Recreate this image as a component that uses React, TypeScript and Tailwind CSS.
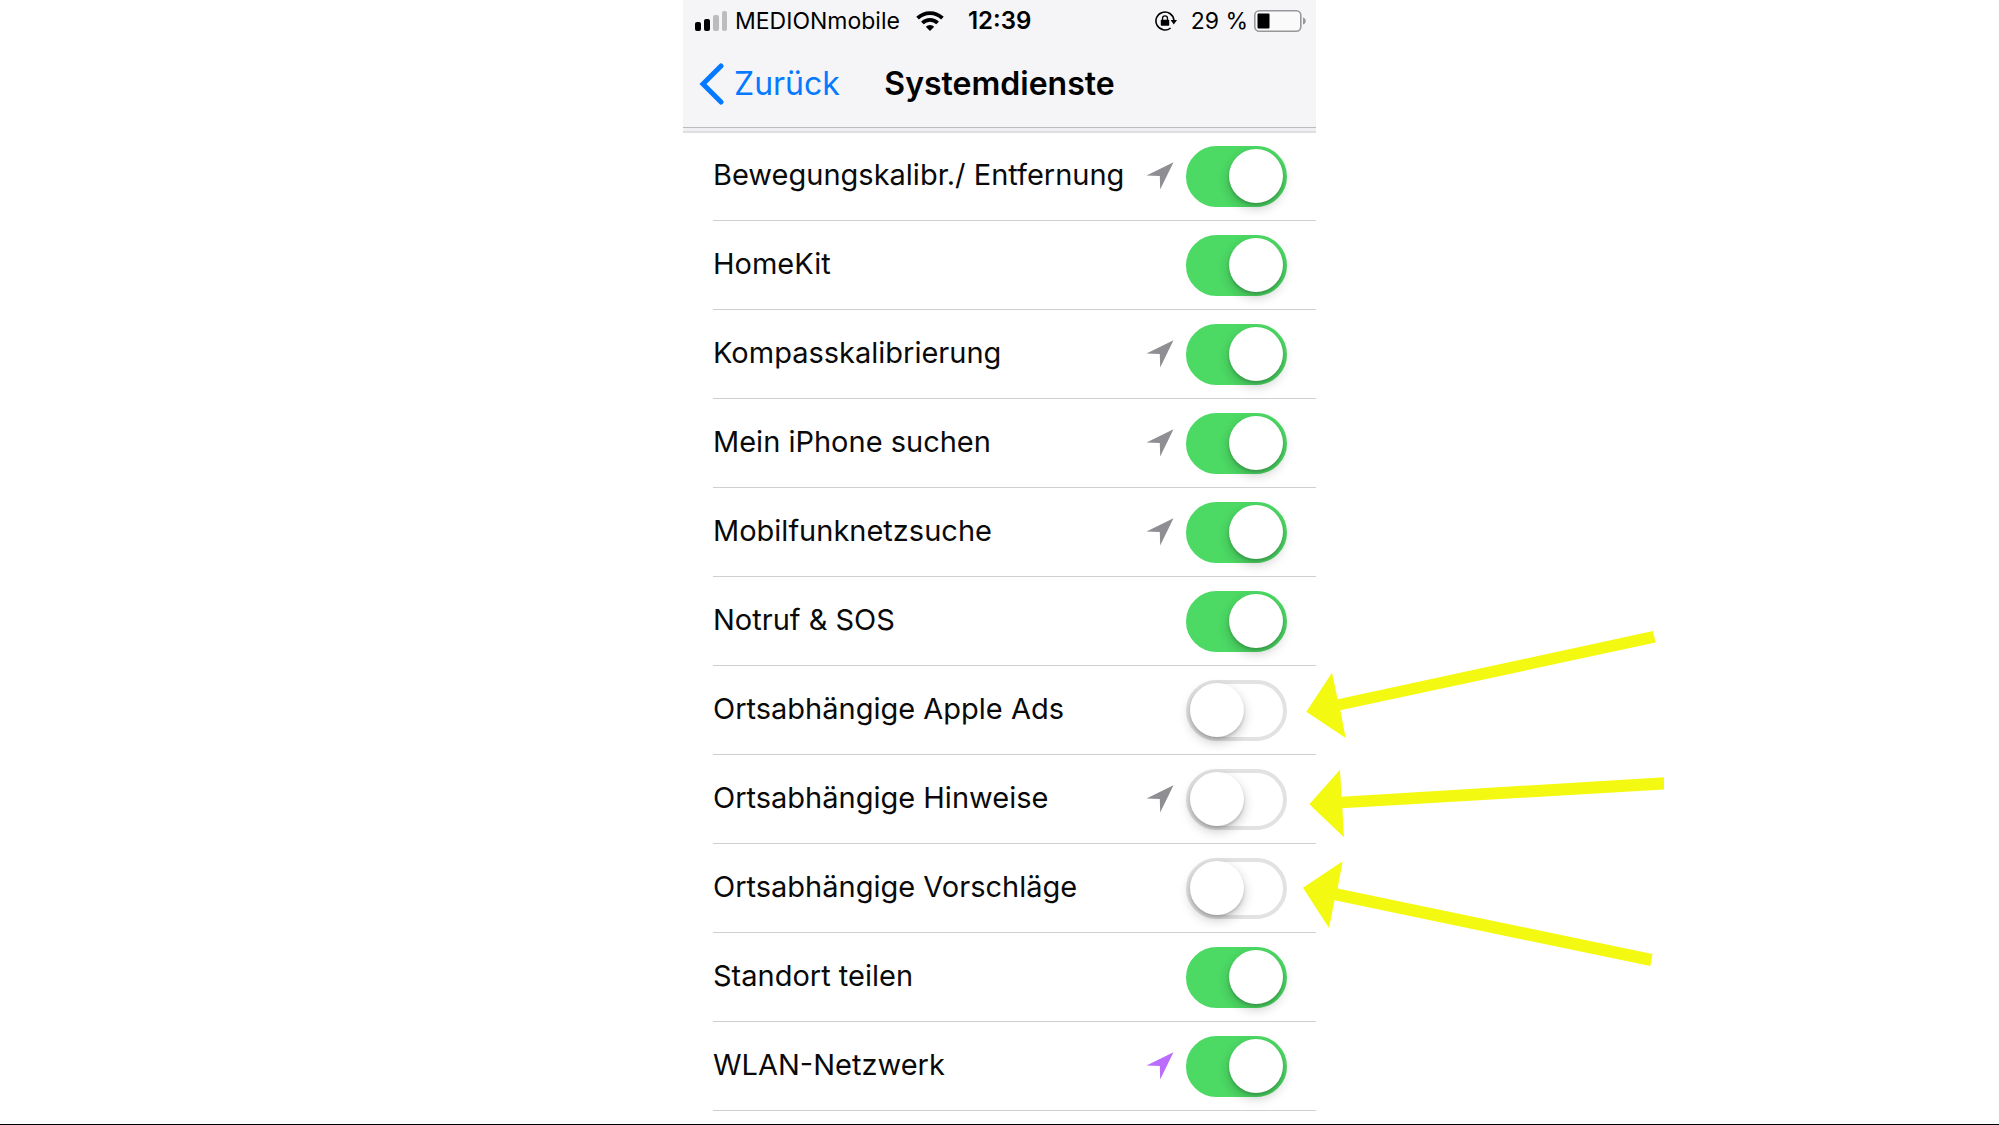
import { useState } from "react";

type LocationTone = "gray" | "purple";

type Service = {
  id: string;
  label: string;
  enabled: boolean;
  location?: LocationTone;
};

const initialServices: Service[] = [
  { id: "motion", label: "Bewegungskalibr./ Entfernung", enabled: true, location: "gray" },
  { id: "homekit", label: "HomeKit", enabled: true },
  { id: "compass", label: "Kompasskalibrierung", enabled: true, location: "gray" },
  { id: "find-iphone", label: "Mein iPhone suchen", enabled: true, location: "gray" },
  { id: "cell", label: "Mobilfunknetzsuche", enabled: true, location: "gray" },
  { id: "sos", label: "Notruf & SOS", enabled: true },
  { id: "ads", label: "Ortsabhängige Apple Ads", enabled: false },
  { id: "alerts", label: "Ortsabhängige Hinweise", enabled: false, location: "gray" },
  { id: "suggestions", label: "Ortsabhängige Vorschläge", enabled: false },
  { id: "share", label: "Standort teilen", enabled: true },
  { id: "wlan", label: "WLAN-Netzwerk", enabled: true, location: "purple" },
];

function SignalIcon() {
  return (
    <svg className="h-5 w-8 shrink-0" viewBox="0 0 32 20" aria-hidden="true">
      <rect x="0" y="11" width="6" height="9" rx="2" fill="#000" />
      <rect x="9" y="8" width="6" height="12" rx="2" fill="#000" />
      <rect x="18" y="4" width="6" height="16" rx="2" fill="#bcbcbe" />
      <rect x="27" y="0" width="5" height="20" rx="2" fill="#bcbcbe" />
    </svg>
  );
}

function WifiIcon() {
  return (
    <svg className="h-5 w-7 shrink-0" viewBox="0 0 28 20" aria-hidden="true">
      <g fill="none" stroke="#000" strokeWidth="3.8">
        <path d="M1.6 7.2a17.6 17.6 0 0 1 24.8 0" />
        <path d="M6.4 12a10.8 10.8 0 0 1 15.2 0" />
      </g>
      <path d="M9.8 15.8a6 6 0 0 1 8.4 0L14 20z" fill="#000" />
    </svg>
  );
}

function RotationLockIcon() {
  return (
    <svg className="h-5 w-[22px] shrink-0" viewBox="0 0 22 20" aria-hidden="true">
      <path
        d="M15.6 17A9 9 0 1 1 18.9 9"
        fill="none"
        stroke="#000"
        strokeWidth="1.6"
      />
      <path d="M15.6 9H22l-3.2 4.4z" fill="#000" />
      <rect x="5.8" y="8.8" width="8.4" height="6" rx="0.8" fill="#000" />
      <path
        d="M7.5 9.2V7.4a2.5 2.5 0 0 1 5 0v1.8"
        fill="none"
        stroke="#000"
        strokeWidth="1.3"
      />
    </svg>
  );
}

function BatteryIcon() {
  return (
    <svg className="h-[22px] w-[52px] shrink-0" viewBox="0 0 52 22" aria-hidden="true">
      <rect x="0.8" y="0.8" width="46" height="20.4" rx="4.5" fill="#fafafa" stroke="#98989b" strokeWidth="1.6" />
      <rect x="3.5" y="3.5" width="12" height="15" rx="1" fill="#000" />
      <path d="M49 7.5c3.6.8 3.6 6.2 0 7z" fill="#98989b" />
    </svg>
  );
}

function LocationArrow({ tone }: { tone: LocationTone }) {
  return (
    <svg
      className={tone === "purple" ? "h-7 w-7 text-[#bb6cfc]" : "h-7 w-7 text-[#8e8e93]"}
      viewBox="0 0 28 28"
      aria-hidden="true"
    >
      <path d="M27.5.3 14.2 27.6 13.8 13.9.5 13.5z" fill="currentColor" />
    </svg>
  );
}

// Yellow arrows pointing at the switches that should be turned off.
function HintArrows() {
  return (
    <svg
      className="pointer-events-none absolute left-full top-[488px] -ml-6 h-[360px] w-[390px]"
      viewBox="2 0 390 360"
      fill="#f4f911"
      aria-hidden="true"
    >
      <path d="M16.3 91.7 42 52.7 47.7 79.2 363 11 365.6 22.6 50.3 90.2 55.7 118z" />
      <path d="M19.3 184.3 50 149.7 51.6 176.7 374 157.3V169.4L52.4 188.3 54 217.3z" />
      <path d="M13 267.7 52.7 241.3 47.6 268.5 362.5 334 360.3 346.1 44.6 280.3 39 308z" />
    </svg>
  );
}

function ServiceRow({
  service,
  onToggle,
}: {
  service: Service;
  onToggle: (id: string) => void;
}) {
  return (
    <li className="ml-[30px] border-b border-[#cfcfd2]">
      <label className="flex h-[88px] items-center pr-[29px]" htmlFor={service.id}>
        <span className="flex-1 whitespace-nowrap pb-0.5 text-[29px] leading-9 text-[#0a0a0a]">
          {service.label}
        </span>
        {service.location ? <LocationArrow tone={service.location} /> : null}
        <input
          id={service.id}
          type="checkbox"
          role="switch"
          checked={service.enabled}
          onChange={() => onToggle(service.id)}
          className="ml-3 flex h-[61px] w-[101px] shrink-0 appearance-none items-center rounded-full border-4 border-[#e2e2e3] bg-white before:size-[54px] before:shrink-0 before:rounded-full before:bg-white before:shadow-[0_5px_12px_rgba(0,0,0,0.22),0_2px_3px_rgba(0,0,0,0.16)] checked:justify-end checked:border-[#4cd964] checked:bg-[#4cd964]"
        />
      </label>
    </li>
  );
}

export default function App() {
  const [services, setServices] = useState(initialServices);

  const handleToggle = (id: string) => {
    setServices((current) =>
      current.map((service) =>
        service.id === id ? { ...service, enabled: !service.enabled } : service,
      ),
    );
  };

  return (
    <div className="min-h-screen overflow-x-hidden border-b border-black bg-white font-['Inter',sans-serif]">
      <main className="mx-auto w-full max-w-[633px]">
        <header className="border-b border-[#bcbcc0] bg-[#f5f5f7] text-black">
          <div className="flex h-[41px] items-center pl-3 pr-2.5 text-[23px] leading-7">
            <SignalIcon />
            <span className="ml-2">MEDIONmobile</span>
            <span className="ml-4">
              <WifiIcon />
            </span>
            <time className="ml-6 text-2xl font-semibold">12:39</time>
            <span className="ml-auto">
              <RotationLockIcon />
            </span>
            <span className="ml-3.5 mr-1.5">29 %</span>
            <BatteryIcon />
          </div>
          <nav className="grid h-[86px] grid-cols-[1fr_auto_1fr] items-center px-4">
            <a href="#" className="flex items-center gap-2.5 text-[32px] leading-10 text-[#057aff]">
              <svg className="h-[42px] w-[25px]" viewBox="0 0 25 42" aria-hidden="true">
                <path
                  d="M22 3 4 21l18 18"
                  fill="none"
                  stroke="currentColor"
                  strokeWidth="5"
                  strokeLinecap="round"
                />
              </svg>
              Zurück
            </a>
            <h1 className="text-[32px] font-semibold leading-10">Systemdienste</h1>
          </nav>
        </header>
        <div className="h-[5px] border-b-2 border-[#dedee3] bg-[#efeff4]" />
        <div className="relative">
          <ul className="-mt-px">
            {services.map((service) => (
              <ServiceRow key={service.id} service={service} onToggle={handleToggle} />
            ))}
          </ul>
          <HintArrows />
        </div>
      </main>
    </div>
  );
}
